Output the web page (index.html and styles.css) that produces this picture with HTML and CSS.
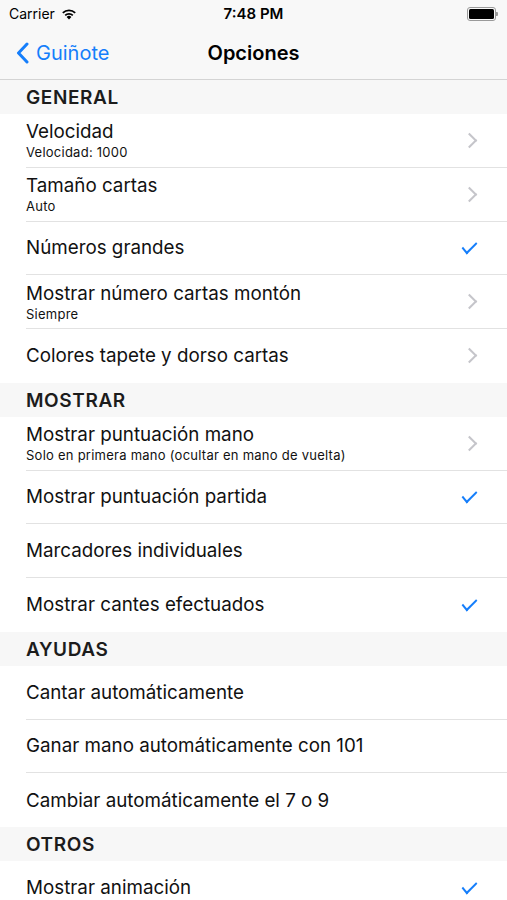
FILE: index.html
```html
<!DOCTYPE html>
<html lang="es">
<head>
    <meta charset="UTF-8">
    <meta name="viewport" content="width=device-width, initial-scale=1.0">
    <title>Opciones</title>
    <link rel="stylesheet" href="styles.css">
</head>
<body>

    <div class="top-bar">
        <div class="status-bar">
            <div class="carrier">
                Carrier
                <svg class="wifi" width="16" height="12" viewBox="0 0 16 12">
                    <path d="M8 11.5 L5.6 8.9 A3.5 3.5 0 0 1 10.4 8.9 Z" fill="#000"/>
                    <path d="M3.6 6.8 A6.3 6.3 0 0 1 12.4 6.8 L11.2 8.1 A4.6 4.6 0 0 0 4.8 8.1 Z" fill="#000"/>
                    <path d="M1.2 4.3 A9.8 9.8 0 0 1 14.8 4.3 L13.6 5.6 A8 8 0 0 0 2.4 5.6 Z" fill="#000"/>
                </svg>
            </div>
            <div class="clock">7:48 PM</div>
            <div class="battery">
                <div class="battery-body"><div class="battery-level"></div></div>
                <div class="battery-tip"></div>
            </div>
        </div>

        <div class="nav-bar">
            <div class="back">
                <svg width="13" height="22" viewBox="0 0 13 22">
                    <path d="M11 2 L2.5 11 L11 20" fill="none" stroke="#157efb" stroke-width="3" stroke-linecap="round" stroke-linejoin="round"/>
                </svg>
                <span>Guiñote</span>
            </div>
            <div class="nav-title">Opciones</div>
        </div>
    </div>

    <div class="section-header">GENERAL</div>
    <div class="group">
        <div class="row">
            <div class="row-text">
                <div class="row-title">Velocidad</div>
                <div class="row-sub">Velocidad: 1000</div>
            </div>
            <span class="chevron"></span>
        </div>
        <div class="row">
            <div class="row-text">
                <div class="row-title">Tamaño cartas</div>
                <div class="row-sub">Auto</div>
            </div>
            <span class="chevron"></span>
        </div>
        <div class="row">
            <div class="row-text">
                <div class="row-title">Números grandes</div>
            </div>
            <span class="check"></span>
        </div>
        <div class="row">
            <div class="row-text">
                <div class="row-title">Mostrar número cartas montón</div>
                <div class="row-sub">Siempre</div>
            </div>
            <span class="chevron"></span>
        </div>
        <div class="row">
            <div class="row-text">
                <div class="row-title">Colores tapete y dorso cartas</div>
            </div>
            <span class="chevron"></span>
        </div>
    </div>

    <div class="section-header">MOSTRAR</div>
    <div class="group">
        <div class="row">
            <div class="row-text">
                <div class="row-title">Mostrar puntuación mano</div>
                <div class="row-sub">Solo en primera mano (ocultar en mano de vuelta)</div>
            </div>
            <span class="chevron"></span>
        </div>
        <div class="row">
            <div class="row-text">
                <div class="row-title">Mostrar puntuación partida</div>
            </div>
            <span class="check"></span>
        </div>
        <div class="row">
            <div class="row-text">
                <div class="row-title">Marcadores individuales</div>
            </div>
        </div>
        <div class="row">
            <div class="row-text">
                <div class="row-title">Mostrar cantes efectuados</div>
            </div>
            <span class="check"></span>
        </div>
    </div>

    <div class="section-header">AYUDAS</div>
    <div class="group">
        <div class="row">
            <div class="row-text">
                <div class="row-title">Cantar automáticamente</div>
            </div>
        </div>
        <div class="row">
            <div class="row-text">
                <div class="row-title">Ganar mano automáticamente con 101</div>
            </div>
        </div>
        <div class="row">
            <div class="row-text">
                <div class="row-title">Cambiar automáticamente el 7 o 9</div>
            </div>
        </div>
    </div>

    <div class="section-header">OTROS</div>
    <div class="group">
        <div class="row">
            <div class="row-text">
                <div class="row-title">Mostrar animación</div>
            </div>
            <span class="check"></span>
        </div>
    </div>

</body>
</html>
```

FILE: styles.css
```css
body {
    font-family: Inter, "Liberation Sans", sans-serif;
    margin: 0;
    background-color: #f7f7f7;
    color: #000;
    overflow: hidden;
}

.top-bar {
    background-color: #f8f8f8;
    border-bottom: 1px solid #d4d4d4;
}

.status-bar {
    height: 27px;
    display: flex;
    align-items: center;
    justify-content: space-between;
    padding: 0 9px 0 9px;
    font-size: 14px;
}

.carrier {
    display: flex;
    align-items: center;
    gap: 6px;
    width: 120px;
}

.clock {
    font-weight: 600;
    font-size: 15px;
}

.battery {
    width: 120px;
    display: flex;
    justify-content: flex-end;
    align-items: center;
}

.battery-body {
    width: 25px;
    height: 10px;
    border: 1px solid #9a9a9a;
    border-radius: 3px;
    padding: 1px;
}

.battery-level {
    width: 100%;
    height: 100%;
    background-color: #000;
    border-radius: 1.5px;
}

.battery-tip {
    width: 2px;
    height: 4px;
    background-color: #9a9a9a;
    border-radius: 0 1px 1px 0;
}

.nav-bar {
    height: 52px;
    position: relative;
    display: flex;
    align-items: center;
    padding-bottom: 1px;
    box-sizing: border-box;
}

.back {
    display: flex;
    align-items: center;
    gap: 7px;
    padding-left: 16px;
    color: #157efb;
    font-size: 20px;
}

.nav-title {
    position: absolute;
    left: 0;
    right: 0;
    text-align: center;
    font-weight: 600;
    font-size: 20px;
    pointer-events: none;
}

.section-header {
    height: 34px;
    display: flex;
    align-items: center;
    padding-left: 26px;
    padding-top: 1px;
    box-sizing: border-box;
    font-size: 19px;
    letter-spacing: 0.6px;
    font-weight: 600;
    color: #1c1c1c;
}

.group {
    background-color: #fff;
}

.row {
    height: 53.75px;
    margin-left: 26px;
    padding-right: 26px;
    display: flex;
    align-items: center;
    justify-content: space-between;
    border-bottom: 1px solid #e2e2e2;
    box-sizing: border-box;
}

.row:last-child {
    border-bottom: none;
}

.row-title {
    font-size: 18.8px;
    color: #111;
}

.row-sub {
    font-size: 13px;
    letter-spacing: 0.25px;
    color: #111;
    margin-top: 1px;
}

.chevron {
    width: 9px;
    height: 9px;
    border-top: 2px solid #c5c5ca;
    border-right: 2px solid #c5c5ca;
    transform: rotate(45deg);
    margin-right: 6px;
}

.check {
    width: 13px;
    height: 6px;
    border-left: 2.5px solid #157efb;
    border-bottom: 2.5px solid #157efb;
    transform: rotate(-45deg) skewX(-5deg);
    margin-right: 4px;
    margin-bottom: 4px;
}
```
